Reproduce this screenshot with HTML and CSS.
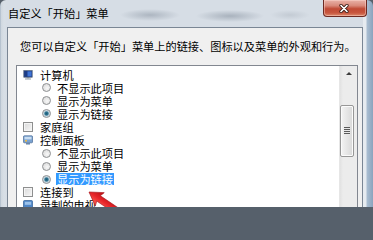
FILE: index.html
```html
<!DOCTYPE html>
<html lang="zh-CN">
<head>
<meta charset="utf-8">
<title>自定义「开始」菜单</title>
<link rel="stylesheet" href="styles.css">
</head>
<body>
<div class="window">
  <div class="titlebar">
    <span class="title">自定义「开始」菜单</span>
    <button class="close" aria-label="关闭">
      <svg class="close-x" viewBox="0 0 10 9" width="10" height="9">
        <path d="M2 1.5 L8 7.5 M8 1.5 L2 7.5" stroke="#3a1a14" stroke-width="3.2" stroke-linecap="round"/>
        <path d="M2 1.5 L8 7.5 M8 1.5 L2 7.5" stroke="#ffffff" stroke-width="1.7" stroke-linecap="round"/>
      </svg>
    </button>
  </div>
  <div class="client">
    <p class="desc">您可以自定义「开始」菜单上的链接、图标以及菜单的外观和行为。</p>
    <div class="listbox">
      <ul class="items">
        <li class="row lvl0">
          <svg class="ico" viewBox="0 0 10 10" width="10" height="10">
            <rect x="0.8" y="0.6" width="8.4" height="6.6" fill="#1d3c86" stroke="#55647a" stroke-width="0.7"/>
            <rect x="4.5" y="1.4" width="4" height="5" fill="#3f74d6"/>
            <rect x="3.6" y="7.4" width="2.8" height="1" fill="#6d7885"/>
            <rect x="2" y="8.4" width="6" height="1.2" fill="#a4acb5"/>
          </svg>
          <span class="label">计算机</span>
        </li>
        <li class="row lvl1"><span class="radio"></span><span class="label">不显示此项目</span></li>
        <li class="row lvl1"><span class="radio"></span><span class="label">显示为菜单</span></li>
        <li class="row lvl1"><span class="radio on"></span><span class="label">显示为链接</span></li>
        <li class="row lvl0"><span class="check"></span><span class="label">家庭组</span></li>
        <li class="row lvl0">
          <svg class="ico" viewBox="0 0 10 10" width="10" height="10">
            <rect x="0.5" y="0.8" width="9" height="7" rx="0.8" fill="#7aa2d0" stroke="#4a6c97" stroke-width="0.7"/>
            <rect x="1.5" y="1.8" width="7" height="2.6" fill="#c9ddf1"/>
            <rect x="2" y="5" width="2" height="1.6" fill="#e6b84a"/>
            <rect x="3" y="8.1" width="4" height="1.4" fill="#5f7ea3"/>
          </svg>
          <span class="label">控制面板</span>
        </li>
        <li class="row lvl1"><span class="radio"></span><span class="label">不显示此项目</span></li>
        <li class="row lvl1"><span class="radio"></span><span class="label">显示为菜单</span></li>
        <li class="row lvl1"><span class="radio on"></span><span class="label selected">显示为链接</span></li>
        <li class="row lvl0"><span class="check"></span><span class="label">连接到</span></li>
        <li class="row lvl0">
          <svg class="ico" viewBox="0 0 10 10" width="10" height="10">
            <rect x="0.5" y="0.5" width="9" height="9" rx="1" fill="#4f86c6" stroke="#2f5f98" stroke-width="0.7"/>
            <rect x="1.8" y="1.8" width="6.4" height="3" fill="#9cc2ea"/>
          </svg>
          <span class="label">录制的电视</span>
        </li>
      </ul>
      <div class="scrollbar">
        <div class="sb-up"><span class="tri"></span></div>
        <div class="thumb"><span class="grip"></span></div>
      </div>
    </div>
  </div>
  <svg class="pointer" viewBox="0 0 48 30" width="48" height="30">
    <defs>
      <linearGradient id="rg" x1="0" y1="0" x2="0" y2="1">
        <stop offset="0" stop-color="#ff6a5a"/>
        <stop offset="0.5" stop-color="#e8262a"/>
        <stop offset="1" stop-color="#b50f12"/>
      </linearGradient>
    </defs>
    <g transform="translate(11 7) rotate(214)">
      <polygon points="0,0 -13,-8 -11.5,-3.2 -36,-3.2 -36,3.2 -11.5,3.2 -13,8" fill="url(#rg)" stroke="#a8141a" stroke-width="0.6"/>
    </g>
  </svg>
</div>
</body>
</html>
```

FILE: styles.css
```css
html, body {
  margin: 0;
  padding: 0;
  overflow: hidden;
}

html {
  background: #56606b;
}

body {
  width: 373px;
  height: 207px;
  font-family: "Noto Sans CJK SC", "Noto Sans", sans-serif;
  color: #000;
}

.window {
  position: relative;
  height: 207px;
  overflow: hidden;
  display: flex;
  flex-direction: column;
  border-radius: 6px 6px 0 0;
  background: linear-gradient(to right,
    #9fafc0 0px, #cfd7df 1px, #d8dfe6 4px, #d6dde5 7px,
    #d6dde5 363px, #e6ebf0 363px, #e6ebf0 366px,
    #a9bdd1 367px, #8aa3bd 373px);
}

.titlebar {
  height: 27px;
  flex: none;
  display: flex;
  align-items: flex-start;
  padding-left: 8px;
  padding-right: 6px;
  background:
    radial-gradient(ellipse 30px 6px at 150px 15px, rgba(95, 108, 124, 0.35), transparent),
    radial-gradient(ellipse 34px 6px at 230px 16px, rgba(95, 108, 124, 0.38), transparent),
    radial-gradient(ellipse 20px 5px at 290px 15px, rgba(120, 130, 142, 0.2), transparent);
}

.title {
  font-size: 11.2px;
  line-height: 27px;
  color: #000;
  white-space: nowrap;
}

.close {
  margin-left: auto;
  width: 44px;
  height: 17px;
  padding: 0;
  border: 1px solid #6d2a22;
  border-top: none;
  border-radius: 0 0 4px 4px;
  background: linear-gradient(to bottom, #e9b2a8 0%, #d98a7b 35%, #c04a35 55%, #c8563e 80%, #dc8a6c 100%);
  box-shadow: inset 0 0 0 1px rgba(255, 220, 210, 0.45);
  display: flex;
  align-items: center;
  justify-content: center;
}

.close-x {
  display: block;
  margin-left: -2px;
}

.client {
  flex: none;
  height: 220px;
  margin: 0 10px 0 7px;
  border: 1px solid #7a8694;
  background: #f0f0f0;
  display: flex;
  flex-direction: column;
}

.desc {
  margin: 0;
  padding: 11px 0 0 12px;
  font-size: 11.2px;
  line-height: 15px;
  white-space: nowrap;
}

.listbox {
  flex: none;
  margin: 11px 4px 0 8px;
  height: 170px;
  border: 1px solid #828790;
  background: #fff;
  display: flex;
}

.items {
  flex: 1;
  margin: 0;
  padding: 2px 0 0 0;
  list-style: none;
}

.row {
  height: 13.1px;
  display: flex;
  align-items: center;
  font-size: 11.2px;
  white-space: nowrap;
}

.lvl0 {
  padding-left: 6px;
  gap: 6px;
}

.lvl1 {
  padding-left: 25px;
  gap: 5px;
}

.ico {
  display: block;
  flex: none;
}

.label {
  display: block;
  padding: 0 1px;
  line-height: 12px;
  height: 12px;
}

.label.selected {
  background: #3399ff;
  color: #fff;
}

.check {
  flex: none;
  width: 10px;
  height: 10px;
  box-sizing: border-box;
  border: 1px solid #8e8f8f;
  background: linear-gradient(135deg, #d9d9d9, #f7f7f7);
  box-shadow: inset 0 0 0 1px #f4f4f4;
}

.radio {
  flex: none;
  width: 9px;
  height: 9px;
  box-sizing: border-box;
  border-radius: 50%;
  border: 1px solid #8e9092;
  background: radial-gradient(circle at 60% 60%, #f8f8f8, #d4d4d4);
}

.radio.on {
  background: radial-gradient(circle at 50% 50%, #1f5a74 0, #2c7391 1.6px, #bcd0da 2.6px, #e2e8ec 4px);
}

.scrollbar {
  width: 17px;
  flex: none;
  background: linear-gradient(to right, #e2e2e2, #ececec 3px, #ececec);
  border-left: 1px solid #e6e6e6;
  display: flex;
  flex-direction: column;
  align-items: flex-start;
}

.sb-up {
  width: 17px;
  height: 17px;
  display: flex;
  justify-content: center;
  padding-top: 6px;
  box-sizing: border-box;
}

.tri {
  width: 0;
  height: 0;
  border-left: 3px solid transparent;
  border-right: 3px solid transparent;
  border-bottom: 3px solid #3c3c3c;
}

.thumb {
  margin-top: 22px;
  width: 14px;
  height: 52px;
  box-sizing: border-box;
  border: 1px solid #979797;
  border-radius: 2px;
  background: linear-gradient(to right, #f4f4f4, #e6e6e6 50%, #d8d8d8);
  box-shadow: inset 0 0 0 1px #fbfbfb;
  display: flex;
  align-items: center;
  justify-content: center;
}

.grip {
  width: 6px;
  height: 8px;
  background: repeating-linear-gradient(to bottom, #5a5a5a 0, #5a5a5a 1px, #e8e8e8 1px, #e8e8e8 2px);
}

.pointer {
  position: absolute;
  left: 78px;
  top: 185px;
  overflow: visible;
}
```
